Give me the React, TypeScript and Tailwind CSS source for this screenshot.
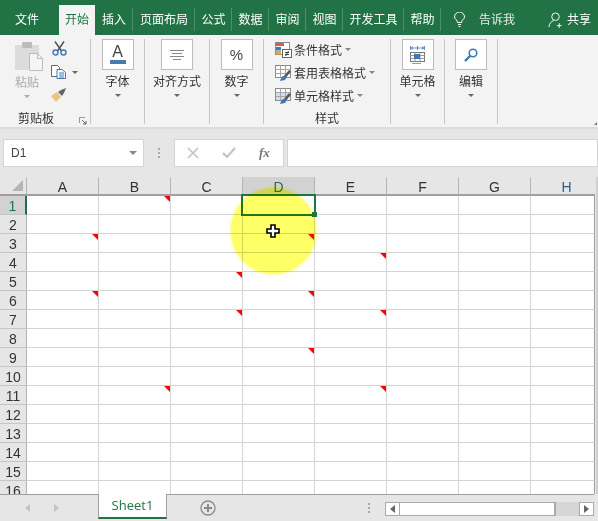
import React from "react";

const FONT = '"Noto Sans CJK SC", sans-serif';
const COLS = ["A", "B", "C", "D", "E", "F", "G", "H"];
const ROWS = Array.from({ length: 16 }, (_, i) => i + 1);
const MARKS = new Set(["B1", "A3", "D3", "E4", "C5", "A6", "D6", "C7", "E7", "D9", "B11", "E11"]);

const TABS: [string, string][] = [
  ["插入", "w-[38px]"],
  ["页面布局", "w-[62px]"],
  ["公式", "w-[37px]"],
  ["数据", "w-[37px]"],
  ["审阅", "w-[37px]"],
  ["视图", "w-[37px]"],
  ["开发工具", "w-[61px]"],
  ["帮助", "w-[37px]"],
];

function Caret({ className = "border-t-[#666]" }: { className?: string }) {
  return <span className={`block w-0 h-0 border-l-[3.5px] border-r-[3.5px] border-t-[3.5px] border-l-transparent border-r-transparent ${className}`} />;
}

function BigButton({ label, children, width }: { label: string; children: React.ReactNode; width: string }) {
  return (
    <div className={`${width} shrink-0 h-[85px] border-r border-[#c6c6c6] flex flex-col items-center`}>
      <div className="w-[32px] h-[31px] border border-[#bdbdbd] bg-white flex items-center justify-center">{children}</div>
      <div className="mt-[2px] h-[18px] leading-[18px] text-[12px] whitespace-nowrap text-[#333]">{label}</div>
      <Caret className="mt-[4px] border-t-[#666]" />
    </div>
  );
}

function StyleRow({ label, children }: { label: string; children: React.ReactNode }) {
  return (
    <div className="h-[23px] flex items-center">
      <span className="w-[18px] h-[18px] block shrink-0">{children}</span>
      <span className="ml-[1px] text-[12px] leading-[18px] text-[#333] whitespace-nowrap">{label}</span>
      <Caret className="ml-[3px] border-t-[#888]" />
    </div>
  );
}

function TableIcon({ fill }: { fill: string }) {
  return (
    <svg viewBox="0 0 18 18" className="w-[18px] h-[18px]">
      <rect x="0.500" y="1.500" width="15" height="12" fill="#fff" stroke="#8a8a8a" />
      <rect x="1" y="5" width="12" height="8" fill={fill} />
      <path d="M.5 5.500h15M.5 9.500h15M5.500 1.500v12M10.500 1.500v12" stroke="#a5a5a5" fill="none" />
      <path d="M9 12l5-6 2 1.500-5 6z" fill="#555" />
      <path d="M5 17l1.500-4 3-1.500 2 2-1.500 2.500z" fill="#3f78b5" />
    </svg>
  );
}

function Ribbon() {
  return (
    <div className="relative h-[94px] bg-[#f3f3f3] border-b-2 border-[#dcdcdc] flex pt-[4px]">
      <div className="w-[91px] shrink-0 h-[85px] border-r border-[#c6c6c6] relative">
        <div className="flex">
          <div className="w-[54px] shrink-0 flex flex-col items-center">
            <svg viewBox="0 0 30 30" className="ml-[4px] w-[30px] h-[30px] mt-[3px]">
              <rect x="1" y="3" width="24" height="25" fill="#dcdcdc" />
              <rect x="8" y="0" width="10" height="6" rx="1" fill="#bcbcbc" />
              <path d="M15.500 11.500h8l5 5v12h-13z" fill="#f5f5f5" stroke="#bcbcbc" />
              <path d="M23.500 11.500v5h5" fill="none" stroke="#bcbcbc" />
            </svg>
            <div className="text-[12px] leading-[18px] mt-[1px] text-[#aaa]">粘贴</div>
            <Caret className="mt-[4px] border-t-[#aaa]" />
          </div>
          <div className="flex flex-col -ml-[3px]">
            <svg viewBox="0 0 15 15" className="ml-[1px] mt-[2px] w-[15px] h-[15px]">
              <path d="M3 .5l6.500 9.500M12 .5L5.500 10" stroke="#555" strokeWidth="1.500" fill="none" />
              <circle cx="3.500" cy="11.500" r="2.500" fill="none" stroke="#3f78b5" strokeWidth="1.400" />
              <circle cx="11.500" cy="11.500" r="2.500" fill="none" stroke="#3f78b5" strokeWidth="1.400" />
            </svg>
            <div className="flex items-center mt-[9px] h-[14px]">
              <svg viewBox="0 0 15 14" className="w-[15px] h-[14px]">
                <path d="M.5.5h6l2 2v9h-8z" fill="#fff" stroke="#666" />
                <path d="M6 4.500h5l3.500 3v6H6z" fill="#fff" stroke="#3f78b5" />
                <path d="M8 8h5M8 10h5M8 12h5" stroke="#3f78b5" />
              </svg>
              <Caret className="ml-[6px] border-t-[#666]" />
            </div>
            <svg viewBox="0 0 15 14" className="w-[15px] h-[14px] mt-[9px]">
              <path d="M0 8l6-4 4 5-5 5z" fill="#edc47f" />
              <path d="M7 4l3-2 5-2-2 5-2 3z" fill="#666" />
            </svg>
          </div>
        </div>
        <div className="absolute left-0 w-[72px] top-[70px] text-center text-[12px] leading-[18px] text-[#333]">剪贴板</div>
        <svg viewBox="0 0 8 8" className="absolute left-[79px] top-[78px] w-[8px] h-[8px]">
          <path d="M.5 6V.5H6" fill="none" stroke="#999" />
          <path d="M3 3l4 4M7 4v3H4" fill="none" stroke="#666" />
        </svg>
      </div>
      <BigButton label="字体" width="w-[54px]">
        <div className="flex flex-col items-center -mt-[1px]">
          <span className="text-[16px] leading-[15px] text-[#444]" style={{ fontFamily: '"Liberation Sans", sans-serif' }}>A</span>
          <span className="block w-[16px] h-[4px] bg-[#4a78b0] mt-[1px]" />
        </div>
      </BigButton>
      <BigButton label="对齐方式" width="w-[65px]">
        <svg viewBox="0 0 14 10" className="w-[14px] h-[10px]">
          <path d="M0 .5h14M2 3.500h10M0 6.500h14M3 9.500h8" stroke="#888" />
        </svg>
      </BigButton>
      <BigButton label="数字" width="w-[54px]">
        <span className="text-[15px] leading-none text-[#444]" style={{ fontFamily: '"Liberation Sans", sans-serif' }}>%</span>
      </BigButton>
      <div className="w-[127px] shrink-0 h-[85px] border-r border-[#c6c6c6] relative pl-[11px] flex flex-col">
        <div className="-mt-[1px]">
          <StyleRow label="条件格式">
            <svg viewBox="0 0 18 18" className="w-[18px] h-[18px]">
              <rect x="0.500" y="1.500" width="14" height="12" fill="#fff" stroke="#8a8a8a" />
              <rect x="1" y="2" width="8" height="3" fill="#d9603f" />
              <rect x="1" y="6" width="5" height="3.500" fill="#3f78b5" />
              <rect x="1" y="10" width="5" height="3.500" fill="#e8a33d" />
              <rect x="7.500" y="8.500" width="9" height="8" fill="#fff" stroke="#666" />
              <path d="M10 11.500h4M10 13.500h4M13.500 10l-3 5" stroke="#444" fill="none" />
            </svg>
          </StyleRow>
          <StyleRow label="套用表格格式"><TableIcon fill="#fff" /></StyleRow>
          <StyleRow label="单元格样式"><TableIcon fill="#cfe0f0" /></StyleRow>
        </div>
        <div className="absolute left-0 w-full top-[70px] text-center text-[12px] leading-[18px] text-[#333]">样式</div>
      </div>
      <BigButton label="单元格" width="w-[54px]">
        <svg viewBox="0 0 15 18" className="w-[15px] h-[18px]">
          <path d="M.5 0v4M14.500 0v4M1 2h13M3 .5L1 2l2 1.500M12 .5L14 2l-2 1.500M7.500 0v4" stroke="#3f78b5" fill="none" strokeWidth="0.800" />
          <rect x=".5" y="6.500" width="14" height="9" fill="#fff" stroke="#777" />
          <path d="M.5 9.500h14M.5 12.500h14M5 6.500v9M10 6.500v9M2 17.500h9" stroke="#999" />
          <rect x="4" y="8" width="6" height="5" fill="#3f78b5" />
        </svg>
      </BigButton>
      <BigButton label="编辑" width="w-[53px]">
        <svg viewBox="0 0 14 14" className="w-[14px] h-[14px]">
          <circle cx="9" cy="5" r="3.800" fill="#fff" stroke="#3f78b5" strokeWidth="1.600" />
          <path d="M6.500 7.500L1 13" stroke="#3f78b5" strokeWidth="2.400" />
        </svg>
      </BigButton>
      <svg viewBox="0 0 4 4" className="absolute right-0 top-[86px] w-[4px] h-[4px]">
        <path d="M0 4l3-3v3z" fill="#777" />
      </svg>
    </div>
  );
}

function FormulaBar() {
  return (
    <div className="h-[48px] bg-[#e6e6e6] flex pt-[10px] items-start">
      <div className="ml-[3px] w-[141px] h-[28px] bg-white border border-[#d4d4d4] flex items-center pl-[7px] pr-[6px] justify-between">
        <span className="text-[12px] text-[#444]" style={{ fontFamily: '"Liberation Sans", sans-serif' }}>D1</span>
        <span className="block w-0 h-0 border-l-[4px] border-r-[4px] border-t-[4px] border-l-transparent border-r-transparent border-t-[#888]" />
      </div>
      <div className="w-[30px] h-[28px] flex flex-col items-center justify-center gap-[2px]">
        <span className="w-[2px] h-[2px] bg-[#aaa]" />
        <span className="w-[2px] h-[2px] bg-[#aaa]" />
        <span className="w-[2px] h-[2px] bg-[#aaa]" />
      </div>
      <div className="w-[110px] h-[28px] bg-white border border-[#d4d4d4] flex items-center pl-[12px]">
        <svg viewBox="0 0 12 12" className="w-[12px] h-[12px]"><path d="M1 1l10 10M11 1L1 11" stroke="#c4c4c4" strokeWidth="1.600" /></svg>
        <svg viewBox="0 0 14 12" className="w-[14px] h-[12px] ml-[23px]"><path d="M1 6l4 4 8-9" stroke="#c4c4c4" strokeWidth="2.200" fill="none" /></svg>
        <span className="ml-[23px] text-[13px] italic font-bold text-[#777]" style={{ fontFamily: '"Liberation Serif", serif' }}>fx</span>
      </div>
      <div className="ml-[3px] flex-1 h-[28px] bg-white border border-[#d4d4d4]" />
    </div>
  );
}

function Grid() {
  return (
    <div className="relative h-[317px] overflow-hidden bg-[#e6e6e6]" style={{ fontFamily: '"Liberation Sans", sans-serif' }}>
      <div className="flex h-[19px]">
        <div className="w-[27px] shrink-0 bg-[#e6e6e6] border-r border-b-2 border-r-[#b5b5b5] border-b-[#9f9f9f] relative">
          <span className="absolute right-[3px] bottom-[3px] w-0 h-0 border-l-[11px] border-b-[11px] border-l-transparent border-b-[#b5b5b5]" />
        </div>
        {COLS.map((c) => (
          <div key={c} className={`${c === "H" ? "w-[64px] pl-[7px] border-r-0" : "w-[72px] border-r"} pt-[3px] shrink-0 flex items-center justify-center text-[14px] border-b-2 border-r-[#b5b5b5] border-b-[#9f9f9f] ${c === "D" ? "bg-[#d2d2d2] text-[#217346]" : c === "H" ? "text-[#2c5f8a]" : "text-[#333]"}`}>{c}</div>
        ))}
        <div className="flex-1 border-r-2 border-[#d0d0d0]" />
      </div>
      {ROWS.map((r) => (
        <div key={r} className="flex h-[19px]">
          <div className={`w-[27px] shrink-0 border-b border-[#c6c6c6] pt-[3px] flex items-center justify-center text-[14px] ${r === 1 ? "bg-[#d2d2d2] text-[#217346] border-r-2 border-r-[#217346]" : "bg-[#e6e6e6] text-[#333] border-r border-r-[#b5b5b5]"}`}>{r}</div>
          {COLS.map((c) => (
            <div key={c} className={`relative ${c === "H" ? "w-[64px] border-r-[#9f9f9f]" : "w-[72px] border-r-[#d4d4d4]"} shrink-0 bg-white border-b border-r border-b-[#d4d4d4]`}>
              {MARKS.has(c + r) && <span className="absolute right-0 top-0 w-0 h-0 border-t-[6px] border-l-[6px] border-t-[#ff0000] border-l-transparent" />}
              {c === "D" && r === 1 && (
                <span className="absolute -left-[2px] -top-[2px] w-[75px] h-[22px] border-2 border-[#217346] z-10">
                  <span className="absolute -right-[3px] -bottom-[3px] w-[5px] h-[5px] bg-[#217346]" />
                </span>
              )}
            </div>
          ))}
          <div className="flex-1 border-r-2 border-[#d0d0d0]" />
        </div>
      ))}
      <div className="absolute left-[231px] top-[11px] w-[85px] h-[86px] rounded-full bg-[#ffff00]/60 z-20 mix-blend-multiply shadow-[0_0_3px_1px_rgba(255,255,0,0.4)]" />
      <svg viewBox="0 0 14 14" className="absolute left-[266px] top-[47px] w-[14px] h-[14px] z-30">
        <path d="M5 1h4v4h4v4H9v4H5V9H1V5h4z" fill="#fff" stroke="#000" strokeWidth="1.600" />
      </svg>
    </div>
  );
}

function Bottom() {
  return (
    <div className="h-[27px] bg-[#e6e6e6] border-t border-[#9f9f9f] flex items-start relative">
      <span className="absolute right-0 -top-[1px] w-[4px] h-[1px] bg-[#e6e6e6]" />
      <div className="w-[98px] flex items-center pl-[25px] gap-[24px] h-[26px] shrink-0">
        <span className="w-0 h-0 border-y-[4px] border-r-[5px] border-y-transparent border-r-[#c4c4c4]" />
        <span className="w-0 h-0 border-y-[4px] border-l-[5px] border-y-transparent border-l-[#c4c4c4]" />
      </div>
      <div className="-mt-[1px] w-[69px] h-[25px] shrink-0 bg-white border-l border-r border-[#9f9f9f] border-b-[2px] border-b-[#217346] flex items-center justify-center text-[13px] text-[#217346]" style={{ fontFamily: '"Open Sans", sans-serif' }}>Sheet1</div>
      <svg viewBox="0 0 16 16" className="ml-[33px] mt-[5px] w-[16px] h-[16px] shrink-0">
        <circle cx="8" cy="8" r="7" fill="none" stroke="#8a8a8a" strokeWidth="1.300" />
        <path d="M4 8h8M8 4v8" stroke="#8a8a8a" strokeWidth="2" />
      </svg>
      <div className="ml-[152px] mt-[8px] flex flex-col gap-[2px] shrink-0">
        <span className="w-[2px] h-[2px] bg-[#aaa]" />
        <span className="w-[2px] h-[2px] bg-[#aaa]" />
        <span className="w-[2px] h-[2px] bg-[#aaa]" />
      </div>
      <div className="ml-[15px] mt-[7px] w-[209px] h-[14px] flex shrink-0">
        <div className="w-[15px] border border-[#aaa] bg-white flex items-center justify-center">
          <span className="w-0 h-0 border-y-[4px] border-r-[5px] border-y-transparent border-r-[#666]" />
        </div>
        <div className="w-[156px] bg-white border-y border-r-2 border-[#aaa]" />
        <div className="flex-1 bg-[#d6d6d6]" />
        <div className="w-[15px] border border-[#aaa] bg-white flex items-center justify-center">
          <span className="w-0 h-0 border-y-[4px] border-l-[5px] border-y-transparent border-l-[#666]" />
        </div>
      </div>
    </div>
  );
}

export default function App() {
  return (
    <div className="w-[598px] h-[521px] overflow-hidden bg-white" style={{ fontFamily: FONT }}>
      <div className="h-[35px] bg-[#217346] flex items-end text-white text-[12px]">
        <div className="w-[59px] h-[30px] pl-[15px] leading-[28px]">文件</div>
        <div className="w-[36px] h-[30px] bg-[#f3f3f3] text-[#217346] text-center leading-[28px]">开始</div>
        {TABS.map(([t, w]) => (
          <div key={t} className={`${w} h-[30px] flex items-start justify-center pl-[1px]`}>
            <span className="leading-[28px] grow text-center">{t}</span>
            <span className="w-px h-[23px] mt-[3px] bg-[#4c8f6b]" />
          </div>
        ))}
        <svg viewBox="0 0 11 15" className="ml-[13px] mb-[8px] w-[11px] h-[15px]">
          <path d="M3.500 10.500c0-2.500-3-3.500-3-5.500a5 5 0 0 1 10 0c0 2-3 3-3 5.500z M4 12.500h3M4.500 14.500h2" fill="none" stroke="#fff" strokeWidth="1" />
        </svg>
        <div className="ml-[14px] h-[30px] leading-[28px] text-[#e4efe9]">告诉我</div>
        <svg viewBox="0 0 16 17" className="ml-[33px] mb-[7px] w-[15px] h-[16px]">
          <circle cx="8" cy="5" r="4" fill="none" stroke="#fff" strokeWidth="1" />
          <path d="M1 16c0-4 3-6 5-7M12 12v5M9.500 14.500h5" fill="none" stroke="#fff" strokeWidth="1" />
        </svg>
        <div className="ml-[4px] h-[30px] leading-[28px]">共享</div>
      </div>
      <Ribbon />
      <FormulaBar />
      <Grid />
      <Bottom />
    </div>
  );
}
